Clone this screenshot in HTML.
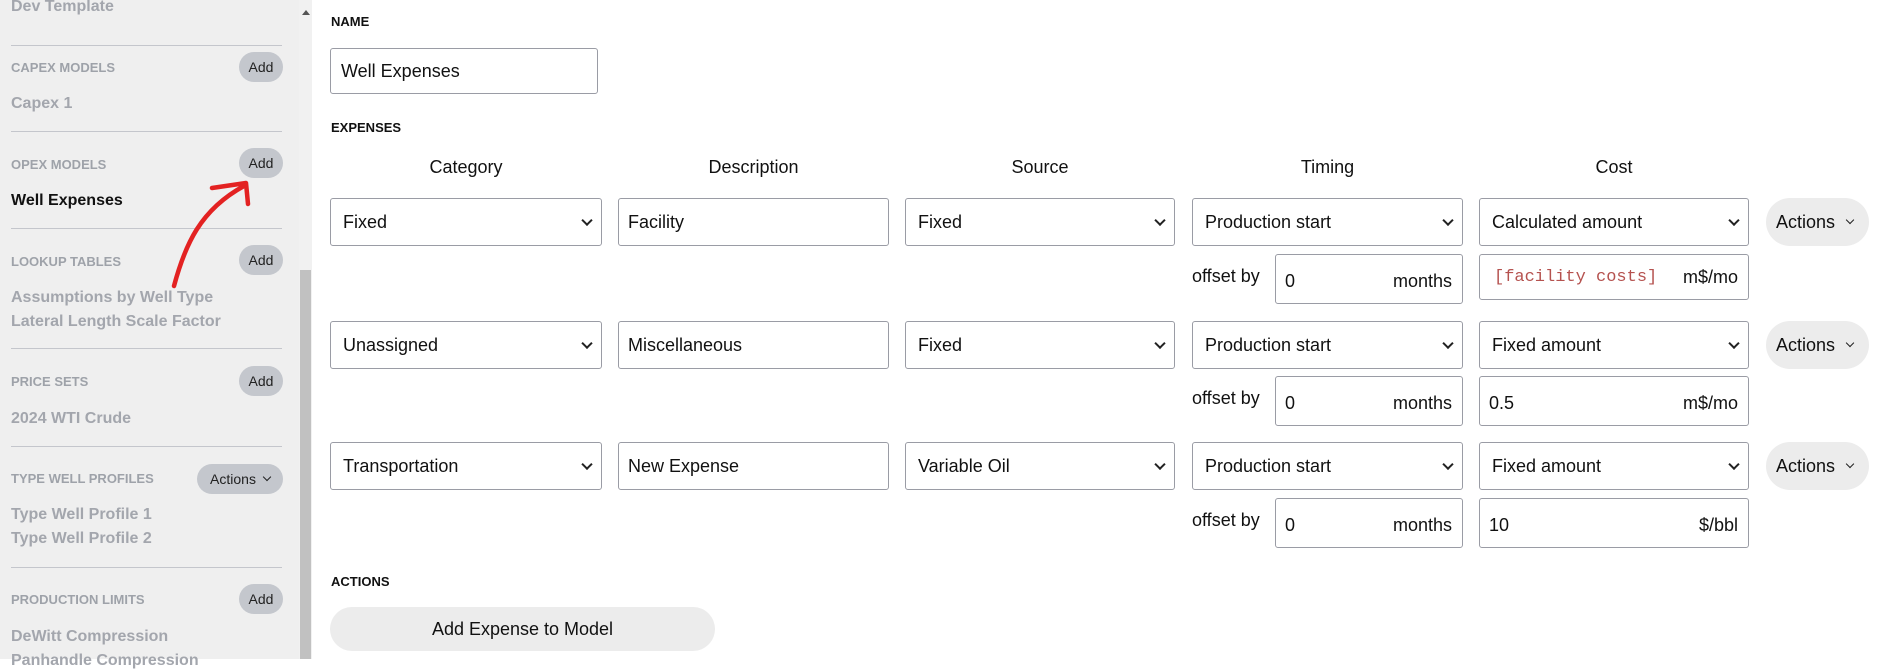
<!DOCTYPE html>
<html><head><meta charset="utf-8"><style>
*{box-sizing:border-box;margin:0;padding:0}
body{width:1884px;height:659px;overflow:hidden;background:#fff;font-family:"Liberation Sans",sans-serif;color:#111;position:relative}
.a{position:absolute}
#sb{left:0;top:0;width:299px;height:659px;background:#efefef}
#scr{left:299px;top:0;width:13px;height:659px;background:#f1f1f1}
#thumb{left:300px;top:270px;width:11px;height:389px;background:#c1c1c1}
.div{left:11px;width:271px;height:1px;background:#c4c6cc}
.sh{left:11px;font-size:13px;font-weight:bold;color:#9ea2a9;line-height:16px}
.si{left:11px;font-size:16px;font-weight:bold;color:#a3a6ad;line-height:20px}
.pill{background:#c4c7cd;border-radius:16px;font-size:14px;color:#222;display:flex;align-items:center;justify-content:center}
.lbl{font-size:13px;font-weight:bold;line-height:16px}
.hd{font-size:18px;line-height:22px;text-align:center}
.box{border:1px solid #9a9ca5;border-radius:3px;background:#fff;font-size:18px;display:flex;align-items:center;padding-left:12px}
.sel::after{content:"";position:absolute;right:10px;top:50%;width:6px;height:6px;border-right:2px solid #222;border-bottom:2px solid #222;transform:translateY(-70%) rotate(45deg)}
.unit{position:absolute;right:10px;font-size:18px}
.act{background:#ececec;border-radius:24px;font-size:18px;display:flex;align-items:center;padding-left:10px}
.act span{display:inline-block;width:6px;height:6px;border-right:1.5px solid #222;border-bottom:1.5px solid #222;transform:rotate(45deg);margin-left:12px;margin-top:-4px}
.off{font-size:18px;line-height:22px}
</style></head><body>
<div class="a" id="sb"></div>
<div class="a" id="scr"></div>
<div class="a" id="thumb"></div>
<div class="a" style="left:302px;top:10px;width:0;height:0;border-left:4px solid transparent;border-right:4px solid transparent;border-bottom:5px solid #555"></div>

<div class="a si" style="top:-3px">Dev Template</div>
<div class="a div" style="top:45px"></div>
<div class="a sh" style="top:60px">CAPEX MODELS</div>
<div class="a pill" style="left:239px;top:52px;width:44px;height:30px">Add</div>
<div class="a si" style="top:94px">Capex 1</div>
<div class="a div" style="top:131px"></div>
<div class="a sh" style="top:157px">OPEX MODELS</div>
<div class="a pill" style="left:239px;top:148px;width:44px;height:30px">Add</div>
<div class="a si" style="top:191px;color:#111">Well Expenses</div>
<div class="a div" style="top:228px"></div>
<div class="a sh" style="top:254px">LOOKUP TABLES</div>
<div class="a pill" style="left:239px;top:245px;width:44px;height:30px">Add</div>
<div class="a si" style="top:288px">Assumptions by Well Type</div>
<div class="a si" style="top:312px">Lateral Length Scale Factor</div>
<div class="a div" style="top:348px"></div>
<div class="a sh" style="top:374px">PRICE SETS</div>
<div class="a pill" style="left:239px;top:366px;width:44px;height:30px">Add</div>
<div class="a si" style="top:409px">2024 WTI Crude</div>
<div class="a div" style="top:446px"></div>
<div class="a sh" style="top:471px">TYPE WELL PROFILES</div>
<div class="a pill" style="left:197px;top:464px;width:86px;height:30px">Actions <span style="display:inline-block;width:6px;height:6px;border-right:1.5px solid #222;border-bottom:1.5px solid #222;transform:rotate(45deg);margin-left:8px;margin-top:-4px"></span></div>
<div class="a si" style="top:505px">Type Well Profile 1</div>
<div class="a si" style="top:529px">Type Well Profile 2</div>
<div class="a div" style="top:567px"></div>
<div class="a sh" style="top:592px">PRODUCTION LIMITS</div>
<div class="a pill" style="left:239px;top:584px;width:44px;height:30px">Add</div>
<div class="a si" style="top:627px">DeWitt Compression</div>
<div class="a si" style="top:651px">Panhandle Compression</div>

<svg class="a" style="left:0;top:0" width="300" height="659"><path d="M174 286 C185 245 200 210 244 186 M212 188 L246 183 L248 204" fill="none" stroke="#e32222" stroke-width="4.5" stroke-linecap="round" stroke-linejoin="round"/></svg>

<div class="a lbl" style="left:331px;top:14px">NAME</div>
<div class="a box" style="left:330px;top:48px;width:268px;height:46px;padding-left:10px">Well Expenses</div>
<div class="a lbl" style="left:331px;top:120px">EXPENSES</div>

<div class="a hd" style="left:330px;top:156px;width:272px">Category</div>
<div class="a hd" style="left:618px;top:156px;width:271px">Description</div>
<div class="a hd" style="left:905px;top:156px;width:270px">Source</div>
<div class="a hd" style="left:1192px;top:156px;width:271px">Timing</div>
<div class="a hd" style="left:1479px;top:156px;width:270px">Cost</div>

<!-- row1 -->
<div class="a box sel" style="left:330px;top:198px;width:272px;height:48px">Fixed</div>
<div class="a box" style="left:618px;top:198px;width:271px;height:48px;padding-left:9px">Facility</div>
<div class="a box sel" style="left:905px;top:198px;width:270px;height:48px">Fixed</div>
<div class="a box sel" style="left:1192px;top:198px;width:271px;height:48px">Production start</div>
<div class="a box sel" style="left:1479px;top:198px;width:270px;height:48px">Calculated amount</div>
<div class="a act" style="left:1766px;top:198px;width:103px;height:48px">Actions<span></span></div>
<div class="a off" style="left:1192px;top:265px">offset by</div>
<div class="a box" style="left:1275px;top:254px;width:188px;height:50px;padding-left:9px;padding-top:4px">0<span class="unit">months</span></div>
<div class="a box" style="left:1479px;top:254px;width:270px;height:46px;padding-left:14px"><span style="font-family:'Liberation Mono',monospace;color:#b5524f;font-size:17px">[facility costs]</span><span class="unit">m$/mo</span></div>

<!-- row2 -->
<div class="a box sel" style="left:330px;top:321px;width:272px;height:48px">Unassigned</div>
<div class="a box" style="left:618px;top:321px;width:271px;height:48px;padding-left:9px">Miscellaneous</div>
<div class="a box sel" style="left:905px;top:321px;width:270px;height:48px">Fixed</div>
<div class="a box sel" style="left:1192px;top:321px;width:271px;height:48px">Production start</div>
<div class="a box sel" style="left:1479px;top:321px;width:270px;height:48px">Fixed amount</div>
<div class="a act" style="left:1766px;top:321px;width:103px;height:48px">Actions<span></span></div>
<div class="a off" style="left:1192px;top:387px">offset by</div>
<div class="a box" style="left:1275px;top:376px;width:188px;height:50px;padding-left:9px;padding-top:4px">0<span class="unit">months</span></div>
<div class="a box" style="left:1479px;top:376px;width:270px;height:50px;padding-left:9px;padding-top:4px">0.5<span class="unit">m$/mo</span></div>

<!-- row3 -->
<div class="a box sel" style="left:330px;top:442px;width:272px;height:48px">Transportation</div>
<div class="a box" style="left:618px;top:442px;width:271px;height:48px;padding-left:9px">New Expense</div>
<div class="a box sel" style="left:905px;top:442px;width:270px;height:48px">Variable Oil</div>
<div class="a box sel" style="left:1192px;top:442px;width:271px;height:48px">Production start</div>
<div class="a box sel" style="left:1479px;top:442px;width:270px;height:48px">Fixed amount</div>
<div class="a act" style="left:1766px;top:442px;width:103px;height:48px">Actions<span></span></div>
<div class="a off" style="left:1192px;top:509px">offset by</div>
<div class="a box" style="left:1275px;top:498px;width:188px;height:50px;padding-left:9px;padding-top:4px">0<span class="unit">months</span></div>
<div class="a box" style="left:1479px;top:498px;width:270px;height:50px;padding-left:9px;padding-top:4px">10<span class="unit">$/bbl</span></div>

<div class="a lbl" style="left:331px;top:574px">ACTIONS</div>
<div class="a" style="left:330px;top:607px;width:385px;height:44px;background:#ececec;border-radius:22px;font-size:18px;display:flex;align-items:center;justify-content:center">Add Expense to Model</div>
</body></html>
